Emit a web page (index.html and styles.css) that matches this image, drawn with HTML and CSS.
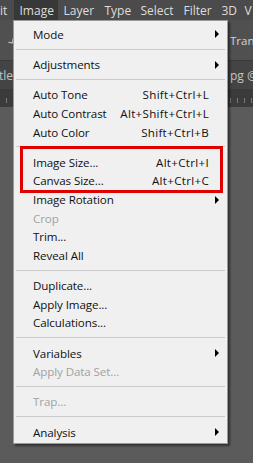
FILE: index.html
```html
<!DOCTYPE html>
<html>
<head>
  <title>Image menu</title>
  <link rel="stylesheet" href="styles.css">
</head>
<body>

  <div class="app">
    <div class="menubar">
      <span class="top-item w-edit">it</span>
      <span class="top-item open w-image">Image</span>
      <span class="top-item w-layer">Layer</span>
      <span class="top-item w-type">Type</span>
      <span class="top-item w-select">Select</span>
      <span class="top-item w-filter">Filter</span>
      <span class="top-item w-3d">3D</span>
      <span class="top-item">V</span>
    </div>

    <div class="options">
      <svg class="chev" width="8" height="6" viewBox="0 0 8 6"><path d="M1 1 L4 4 L7 1" fill="none" stroke="#bdbdbd" stroke-width="1.2"/></svg>
      <span class="opt-label">Trans</span>
    </div>

    <div class="tabs">
      <span class="tab">tle</span>
      <span class="tab">pg @</span>
    </div>

    <div class="ruler"></div>
    <div class="workspace"></div>

    <!-- the open Image menu -->
    <div class="dropdown">
      <div class="item"><span class="label">Mode</span><span class="key"></span><span class="sub"></span></div>
      <div class="sep"></div>
      <div class="item"><span class="label">Adjustments</span><span class="key"></span><span class="sub"></span></div>
      <div class="sep"></div>
      <div class="item"><span class="label">Auto Tone</span><span class="key">Shift+Ctrl+L</span><span class="none"></span></div>
      <div class="item"><span class="label">Auto Contrast</span><span class="key">Alt+Shift+Ctrl+L</span><span class="none"></span></div>
      <div class="item"><span class="label">Auto Color</span><span class="key">Shift+Ctrl+B</span><span class="none"></span></div>
      <div class="sep"></div>
      <div class="item"><span class="label">Image Size...</span><span class="key">Alt+Ctrl+I</span><span class="none"></span></div>
      <div class="item"><span class="label">Canvas Size...</span><span class="key">Alt+Ctrl+C</span><span class="none"></span></div>
      <div class="item"><span class="label">Image Rotation</span><span class="key"></span><span class="sub"></span></div>
      <div class="item disabled"><span class="label">Crop</span><span class="key"></span><span class="none"></span></div>
      <div class="item"><span class="label">Trim...</span><span class="key"></span><span class="none"></span></div>
      <div class="item"><span class="label">Reveal All</span><span class="key"></span><span class="none"></span></div>
      <div class="sep"></div>
      <div class="item"><span class="label">Duplicate...</span><span class="key"></span><span class="none"></span></div>
      <div class="item"><span class="label">Apply Image...</span><span class="key"></span><span class="none"></span></div>
      <div class="item"><span class="label">Calculations...</span><span class="key"></span><span class="none"></span></div>
      <div class="sep"></div>
      <div class="item"><span class="label">Variables</span><span class="key"></span><span class="sub"></span></div>
      <div class="item disabled"><span class="label">Apply Data Set...</span><span class="key"></span><span class="none"></span></div>
      <div class="sep"></div>
      <div class="item disabled"><span class="label">Trap...</span><span class="key"></span><span class="none"></span></div>
      <div class="sep"></div>
      <div class="item"><span class="label">Analysis</span><span class="key"></span><span class="sub"></span></div>

      <div class="highlight"></div>
    </div>
  </div>

</body>
</html>
```

FILE: styles.css
```css
body {
  margin: 0;
  font-family: "Open Sans", "Noto Sans", sans-serif;
  background-color: #5a5a5a;
}
.app {
  position: relative;
  width: 253px;
  height: 463px;
  overflow: hidden;
  display: flex;
  flex-direction: column;
}
.menubar {
  height: 20px;
  background-color: #4b4b4b;
  display: flex;
  align-items: stretch;
  white-space: nowrap;
  font-size: 12px;
  color: #dedede;
}
.top-item {
  flex: none;
  display: flex;
  align-items: center;
  padding-left: 5.5px;
  box-sizing: border-box;
}
.w-edit { width: 14px; padding-left: 0; }
.w-image { width: 44px; }
.w-layer { width: 41px; }
.w-type { width: 36px; }
.w-select { width: 43px; }
.w-filter { width: 38px; }
.w-3d { width: 23px; }
.top-item.open {
  background-color: #383838;
}
.options {
  height: 40px;
  background-color: #505050;
  display: flex;
  align-items: center;
  justify-content: space-between;
  padding: 0 0 0 8px;
  font-size: 11.5px;
  color: #d4d4d4;
  white-space: nowrap;
}
.chev {
  transform: rotate(-40deg);
  margin-top: 3px;
}
.opt-label {
  width: 23px;
  overflow: hidden;
}
.tabs {
  height: 28px;
  background-color: #444444;
  display: flex;
  justify-content: space-between;
  align-items: center;
  font-size: 12px;
  color: #c4c4c4;
  border-top: 1px solid #3a3a3a;
  white-space: nowrap;
}
.tab:last-child {
  width: 23px;
  overflow: hidden;
}
.tab:first-child {
  margin-left: -1px;
}
.ruler {
  height: 18px;
  background-color: #3b3b3b;
  background-image: repeating-linear-gradient(90deg, transparent 0 6px, #7a7a7a 6px 7px);
  background-size: 100% 5px;
  background-repeat: no-repeat;
  background-position: 0 9px;
}
.workspace {
  flex: 1;
  background-color: #5b5b5b;
}
.dropdown {
  position: absolute;
  left: 13px;
  top: 20px;
  width: 215px;
  height: 424px;
  box-sizing: border-box;
  padding: 4px 0 2px 0;
  background-color: #f0f0f0;
  border: 1px solid #9a9a9a;
  box-shadow: 2px 2px 2px rgba(0, 0, 0, 0.45);
  font-size: 11.6px;
  color: #111;
}
.item {
  height: 18.6px;
  display: flex;
  align-items: center;
  padding-left: 19px;
  white-space: nowrap;
}
.item .label {
  flex: 1;
  letter-spacing: -0.1px;
}
.item .key {
  letter-spacing: 0.3px;
}
.item.disabled {
  color: #a2a2a2;
}
.sub, .none {
  width: 18px;
  height: 18px;
  display: flex;
  align-items: center;
}
.sub::before {
  content: "";
  margin-left: 6px;
  border-left: 4px solid #000;
  border-top: 4px solid transparent;
  border-bottom: 4px solid transparent;
}
.sep {
  height: 1px;
  margin: 5px 2px 5.7px 2px;
  background-color: #cbcbcb;
}
.highlight {
  position: absolute;
  left: 6px;
  top: 125px;
  width: 203px;
  height: 47px;
  box-sizing: border-box;
  border: 3px solid #e00000;
}
```
